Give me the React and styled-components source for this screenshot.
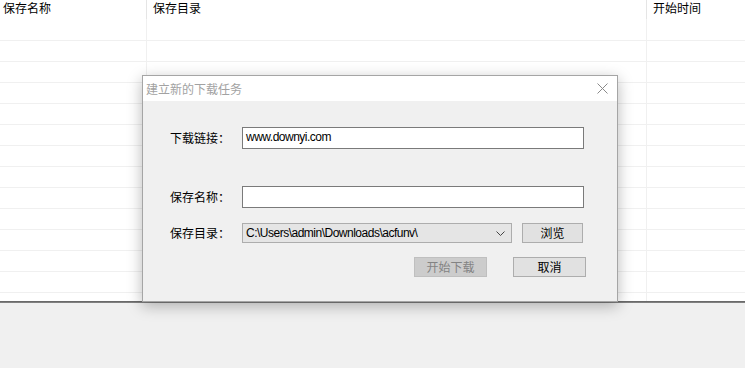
import React from "react";
import styled, { createGlobalStyle } from "styled-components";

const Global = createGlobalStyle`
  html, body { margin: 0; padding: 0; background: #f0f0f0; }
  body { font-family: "Noto Sans CJK SC", "Noto Sans", sans-serif; font-size: 12px; color: #000; }
  * { box-sizing: border-box; }
`;

const LatinFont = `"Liberation Sans", "Noto Sans CJK SC", sans-serif`;

const Page = styled.div`
  position: relative;
  width: 745px;
  height: 368px;
  display: flex;
  flex-direction: column;
  overflow: hidden;
  background: #f0f0f0;
`;

const Table = styled.div`
  height: 301px;
  background: #fff;
  display: flex;
  flex-direction: column;
  overflow: hidden;
`;

const Columns = "147px 500px 1fr";

const HeaderRow = styled.div`
  display: grid;
  grid-template-columns: ${Columns};
  height: 19px;
  flex: none;
`;

const HeaderCell = styled.div`
  padding-left: ${(p) => p.$pad}px;
  line-height: 16px;
  font-size: 12px;
  color: #000;
  border-right: ${(p) => (p.$last ? "none" : "1px solid #e5e5e5")};
  white-space: nowrap;
`;

const Row = styled.div`
  display: grid;
  grid-template-columns: ${Columns};
  height: ${(p) => p.$h}px;
  flex: none;
  border-bottom: 1px solid #f0f0f0;
`;

const Cell = styled.div`
  border-right: ${(p) => (p.$last ? "none" : "1px solid #f0f0f0")};
`;

const BottomRule = styled.div`
  height: 2px;
  flex: none;
  background: linear-gradient(#5f5f5f, #8a8a8a);
`;

const Footer = styled.div`
  flex: 1;
  background: #f0f0f0;
`;

const Dialog = styled.div`
  position: absolute;
  left: 142px;
  top: 75px;
  width: 476px;
  height: 227px;
  background: #f0f0f0;
  border: 1px solid #a5a5a5;
  box-shadow: 0 4px 14px rgba(0, 0, 0, 0.28);
  display: flex;
  flex-direction: column;
`;

const TitleBar = styled.div`
  height: 25px;
  flex: none;
  background: #fff;
  display: flex;
  align-items: center;
  justify-content: space-between;
  padding: 0 0 0 3px;
`;

const Title = styled.span`
  color: #a2a2a2;
  font-size: 12px;
  line-height: 16px;
`;

const Close = styled.div`
  width: 30px;
  height: 25px;
  display: flex;
  align-items: center;
  justify-content: center;
`;

const Body = styled.div`
  display: flex;
  flex-direction: column;
  padding: 0 0 0 27px;
`;

const FormRow = styled.div`
  display: flex;
  align-items: center;
  margin-top: ${(p) => p.$mt}px;
`;

const Label = styled.div`
  width: 72px;
  flex: none;
  font-size: 12px;
  line-height: 16px;
  color: #000;
  white-space: nowrap;
`;

const TextBox = styled.div`
  width: 342px;
  height: 22px;
  background: #fff;
  border: 1px solid #7a7a7a;
  padding-left: 3px;
  font-family: ${LatinFont};
  font-size: 12px;
  letter-spacing: -0.5px;
  line-height: 19px;
  color: #000;
  white-space: nowrap;
`;

const Select = styled.div`
  width: 270px;
  height: 20px;
  background: #e5e5e5;
  border: 1px solid #adadad;
  display: flex;
  align-items: center;
  justify-content: space-between;
  padding: 0 6px 0 3px;
  font-family: ${LatinFont};
  font-size: 12px;
  color: #000;
  white-space: nowrap;
`;

const SelectText = styled.span`
  line-height: 16px;
  letter-spacing: -0.5px;
`;

const Button = styled.div`
  width: ${(p) => p.$w}px;
  height: 20px;
  flex: none;
  margin-left: ${(p) => p.$ml}px;
  display: flex;
  align-items: center;
  justify-content: center;
  font-size: 12px;
  line-height: 16px;
  background: ${(p) => (p.$disabled ? "#cccccc" : "#e1e1e1")};
  border: 1px solid ${(p) => (p.$disabled ? "#bfbfbf" : "#adadad")};
  color: ${(p) => (p.$disabled ? "#838383" : "#000")};
`;

const ButtonRow = styled.div`
  display: flex;
  margin-top: 14px;
  padding-left: 244px;
`;

export default function App() {
  const rows = Array.from({ length: 14 });
  return (
    <Page>
      <Global />
      <Table>
        <HeaderRow>
          <HeaderCell $pad={3}>保存名称</HeaderCell>
          <HeaderCell $pad={6}>保存目录</HeaderCell>
          <HeaderCell $pad={6} $last>开始时间</HeaderCell>
        </HeaderRow>
        {rows.map((_, i) => (
          <Row key={i} $h={i === 0 ? 22 : 21}>
            <Cell />
            <Cell />
            <Cell $last />
          </Row>
        ))}
      </Table>
      <BottomRule />
      <Footer />

      <Dialog>
        <TitleBar>
          <Title>建立新的下载任务</Title>
          <Close>
            <svg width="11" height="11" viewBox="0 0 11 11">
              <path d="M0.5 0.5 L10.5 10.5 M10.5 0.5 L0.5 10.5" stroke="#8a8a8a" strokeWidth="1" fill="none" />
            </svg>
          </Close>
        </TitleBar>
        <Body>
          <FormRow $mt={26}>
            <Label>下载链接：</Label>
            <TextBox>www.downyi.com</TextBox>
          </FormRow>
          <FormRow $mt={37}>
            <Label>保存名称：</Label>
            <TextBox />
          </FormRow>
          <FormRow $mt={15}>
            <Label>保存目录：</Label>
            <Select>
              <SelectText>C:\Users\admin\Downloads\acfunv\</SelectText>
              <svg width="9" height="5" viewBox="0 0 9 5">
                <path d="M0.5 0.5 L4.5 4.5 L8.5 0.5" stroke="#444" strokeWidth="1" fill="none" />
              </svg>
            </Select>
            <Button $w={61} $ml={10}>浏览</Button>
          </FormRow>
          <ButtonRow>
            <Button $w={73} $ml={0} $disabled>开始下载</Button>
            <Button $w={73} $ml={26}>取消</Button>
          </ButtonRow>
        </Body>
      </Dialog>
    </Page>
  );
}
